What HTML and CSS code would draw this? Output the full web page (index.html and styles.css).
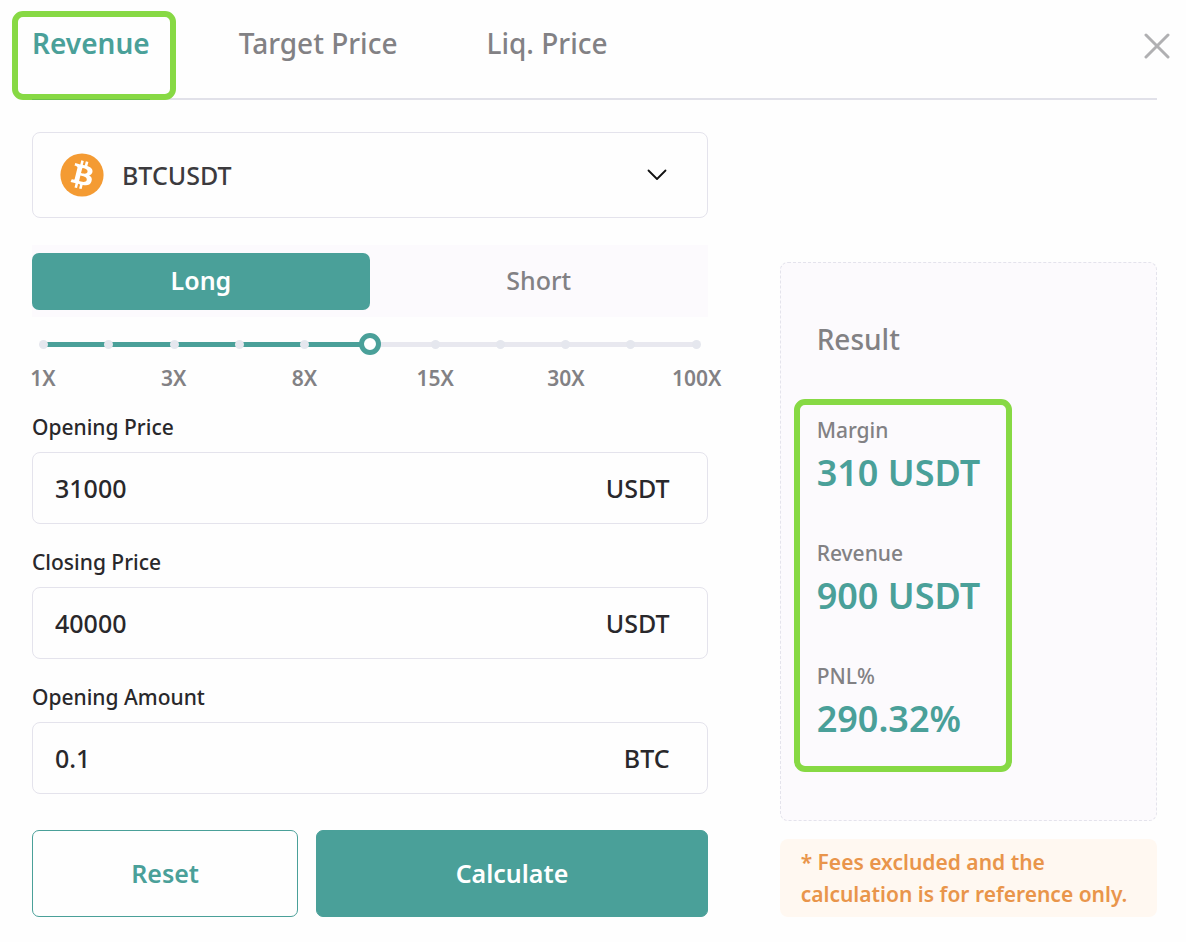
FILE: index.html
```
<!DOCTYPE html>
<html lang="en">
<head>
    <meta charset="UTF-8">
    <meta name="viewport" content="width=device-width, initial-scale=1.0">
    <title>Futures Calculator</title>
    <link rel="stylesheet" href="styles.css">
</head>
<body>
    <div class="calculator">
        <header class="header">
            <nav class="tabs">
                <button class="tab active" type="button">Revenue</button>
                <button class="tab" type="button">Target Price</button>
                <button class="tab" type="button">Liq. Price</button>
            </nav>
            <button class="close-btn" type="button" aria-label="Close">
                <svg width="26" height="26" viewBox="0 0 26 26" fill="none" stroke="#b0b0b2" stroke-width="3" stroke-linecap="round">
                    <path d="M2 2L24 24M24 2L2 24"/>
                </svg>
            </button>
        </header>

        <main class="content">
            <form class="form">
                <div class="pair-select">
                    <svg class="coin" viewBox="0 0 32 32">
                        <circle cx="16" cy="16" r="15.700" fill="#f49b33"/>
                        <path fill="#fff" transform="translate(-1.200 -1.200) scale(1.070)" d="M23.2 14c.3-2.100-1.300-3.200-3.500-4l.7-2.800-1.700-.4-.7 2.700-1.400-.3.700-2.700-1.700-.4-.7 2.800-1.100-.3-2.300-.6-.5 1.800s1.300.3 1.200.3c.7.200.8.600.8 1l-.8 3.200-1.100 4.500c-.1.200-.3.500-.8.400l-1.200-.3-.8 1.900 2.200.6 1.200.3-.7 2.800 1.700.4.7-2.800 1.400.4-.7 2.700 1.700.4.7-2.800c2.900.6 5.100.3 6-2.300.7-2.100 0-3.300-1.600-4.100 1.100-.3 2-1 2.300-2.400zm-3.900 5.500c-.5 2.100-4.100 1-5.200.7l.9-3.800c1.200.3 4.900.9 4.300 3.100zm.5-5.500c-.5 1.900-3.400.9-4.400.7l.9-3.400c1 .2 4.100.7 3.500 2.700z"/>
                    </svg>
                    <select aria-label="Trading pair">
                        <option>BTCUSDT</option>
                    </select>
                    <svg class="chevron" width="20" height="12" viewBox="0 0 20 12" fill="none" stroke="#111" stroke-width="1.800" stroke-linecap="round" stroke-linejoin="round">
                        <path d="M1.500 1.500L10 10L18.500 1.500"/>
                    </svg>
                </div>

                <div class="side-switch">
                    <button class="side active" type="button">Long</button>
                    <button class="side" type="button">Short</button>
                </div>

                <div class="leverage">
                    <div class="slider">
                        <div class="rail"></div>
                        <div class="dots">
                            <i></i><i></i><i></i><i></i><i></i><i></i><i></i><i></i><i></i><i></i><i></i>
                        </div>
                        <input type="range" min="0" max="10" value="5" aria-label="Leverage">
                    </div>
                    <div class="marks">
                        <span>1X</span>
                        <span>3X</span>
                        <span>8X</span>
                        <span>15X</span>
                        <span>30X</span>
                        <span>100X</span>
                    </div>
                </div>

                <div class="field">
                    <label for="openingPrice">Opening Price</label>
                    <div class="input-box">
                        <input type="text" id="openingPrice" value="31000">
                        <span>USDT</span>
                    </div>
                </div>

                <div class="field">
                    <label for="closingPrice">Closing Price</label>
                    <div class="input-box">
                        <input type="text" id="closingPrice" value="40000">
                        <span>USDT</span>
                    </div>
                </div>

                <div class="field">
                    <label for="openingAmount">Opening Amount</label>
                    <div class="input-box">
                        <input type="text" id="openingAmount" value="0.1">
                        <span>BTC</span>
                    </div>
                </div>

                <div class="actions">
                    <button class="btn btn-reset" type="reset">Reset</button>
                    <button class="btn btn-calculate" type="button">Calculate</button>
                </div>
            </form>

            <aside class="sidebar">
                <section class="result">
                    <h2>Result</h2>
                    <dl class="result-list">
                        <div>
                            <dt>Margin</dt>
                            <dd>310 USDT</dd>
                        </div>
                        <div>
                            <dt>Revenue</dt>
                            <dd>900 USDT</dd>
                        </div>
                        <div>
                            <dt>PNL%</dt>
                            <dd>290.32%</dd>
                        </div>
                    </dl>
                </section>
                <p class="note">* Fees excluded and the calculation is for reference only.</p>
            </aside>
        </main>
    </div>
</body>
</html>
```
FILE: styles.css
```
* {
    box-sizing: border-box;
}

body {
    margin: 0;
    font-family: "Noto Sans", sans-serif;
    font-weight: 500;
    color: #29282b;
    background-color: #fefefe;
}

button,
input,
select {
    font: inherit;
    color: inherit;
    background: none;
    border: 0;
    padding: 0;
    margin: 0;
}

button {
    cursor: pointer;
}

.calculator {
    padding: 0 29px 24px 32px;
}

/* Header */
.header {
    display: flex;
    align-items: flex-start;
    justify-content: space-between;
    border-bottom: 2px solid #e1e1e9;
}

.tabs {
    display: flex;
    gap: 89px;
}

.tab {
    position: relative;
    padding: 23px 0 35px;
    font-size: 28px;
    line-height: 40px;
    color: #828184;
}

.tab.active {
    color: #4aa099;
    font-weight: 600;
}

/* highlight frame around the active tab */
.tab.active::after {
    content: "";
    position: absolute;
    top: 11px;
    left: -20px;
    right: -26px;
    bottom: -2px;
    border: 6px solid #87d944;
    border-radius: 11px;
}

/* underline of the active tab */
.tab.active::before {
    content: "";
    position: absolute;
    z-index: 1;
    left: 0;
    right: 0;
    bottom: -2px;
    height: 1px;
    background-color: #6cc04b;
}

.close-btn {
    display: flex;
    margin: 33px -13px 0 0;
}

/* Layout */
.content {
    display: grid;
    grid-template-columns: 675fr 377fr;
    gap: 72px;
    padding-top: 32px;
}

/* Pair select */
.pair-select {
    display: flex;
    align-items: center;
    gap: 18px;
    height: 86px;
    padding: 0 40px 0 27px;
    border: 1px solid #e4e3ec;
    border-radius: 8px;
}

.coin {
    width: 44px;
    height: 44px;
}

.pair-select select {
    flex: 1;
    height: 60px;
    appearance: none;
    font-size: 25px;
    color: #3c3b3e;
}

/* Long / Short */
.side-switch {
    display: grid;
    grid-template-columns: 1fr 1fr;
    margin-top: 27px;
    padding: 8px 0 7px;
    background-color: #fcfafd;
}

.side {
    height: 57px;
    padding-bottom: 3px;
    border-radius: 7px;
    font-size: 25px;
    color: #828184;
}

.side.active {
    background-color: #4aa099;
    color: #fff;
    font-weight: 600;
}

/* Leverage slider */
.leverage {
    margin-top: 16px;
}

.slider {
    display: grid;
    align-items: center;
}

.slider > * {
    grid-area: 1 / 1;
}

.rail {
    height: 5px;
    margin: 0 11px;
    background: linear-gradient(to right, #4aa099 50%, #e8e8ef 50%);
}

.dots {
    display: flex;
    justify-content: space-between;
    padding: 0 7px;
}

.dots i {
    width: 9px;
    height: 9px;
    border-radius: 50%;
    background-color: #e5e7ee;
}

.slider input {
    width: 100%;
    height: 22px;
    appearance: none;
    cursor: pointer;
}

.slider input::-webkit-slider-thumb {
    appearance: none;
    width: 22px;
    height: 22px;
    border: 5px solid #4aa099;
    border-radius: 50%;
    background-color: #fff;
}

.marks {
    display: flex;
    justify-content: space-between;
    margin-top: 8px;
    font-size: 21px;
    line-height: 30px;
    font-weight: 600;
    color: #828184;
}

.marks span {
    display: flex;
    justify-content: center;
    width: 22px;
}

/* Fields */
.field {
    margin-top: 23px;
}

.leverage + .field {
    margin-top: 19px;
}

.field label {
    display: block;
    font-size: 21px;
    line-height: 30px;
    padding-bottom: 10px;
}

.input-box {
    display: flex;
    align-items: center;
    height: 72px;
    padding: 0 37px 1px 22px;
    border: 1px solid #e4e3ec;
    border-radius: 8px;
    font-size: 25px;
}

.input-box input {
    flex: 1;
    min-width: 0;
}

/* Buttons */
.actions {
    display: grid;
    grid-template-columns: 266fr 391fr;
    gap: 18px;
    margin-top: 36px;
}

.btn {
    height: 87px;
    padding-bottom: 2px;
    border: 1px solid #4aa099;
    border-radius: 7px;
    font-size: 25px;
    font-weight: 600;
}

.btn-reset {
    color: #4aa099;
}

.btn-calculate {
    background-color: #4aa099;
    color: #fff;
}

/* Result */
.sidebar {
    display: flex;
    flex-direction: column;
    gap: 18px;
    padding-top: 130px;
}

.result {
    flex: 1;
    padding: 56px 13px 46px;
    border: 1px dashed #e4e3ec;
    border-radius: 8px;
    background-color: #fcfafd;
}

.result h2 {
    margin: 0 0 40px 23px;
    font-size: 28px;
    line-height: 40px;
    font-weight: 500;
    color: #828184;
}

.result-list {
    display: flex;
    flex-direction: column;
    gap: 37px;
    width: fit-content;
    margin: 0;
    padding: 10px 26px 19px 17px;
    border: 6px solid #87d944;
    border-radius: 11px;
}

.result-list dt {
    font-size: 21px;
    line-height: 30px;
    color: #828184;
}

.result-list dd {
    margin: 0;
    font-size: 36px;
    line-height: 56px;
    font-weight: 600;
    color: #4aa099;
}

.note {
    margin: 0;
    padding: 7px 21px;
    border-radius: 8px;
    background-color: #fff8f1;
    font-size: 21px;
    line-height: 32px;
    font-weight: 600;
    color: #e9954b;
}
```
